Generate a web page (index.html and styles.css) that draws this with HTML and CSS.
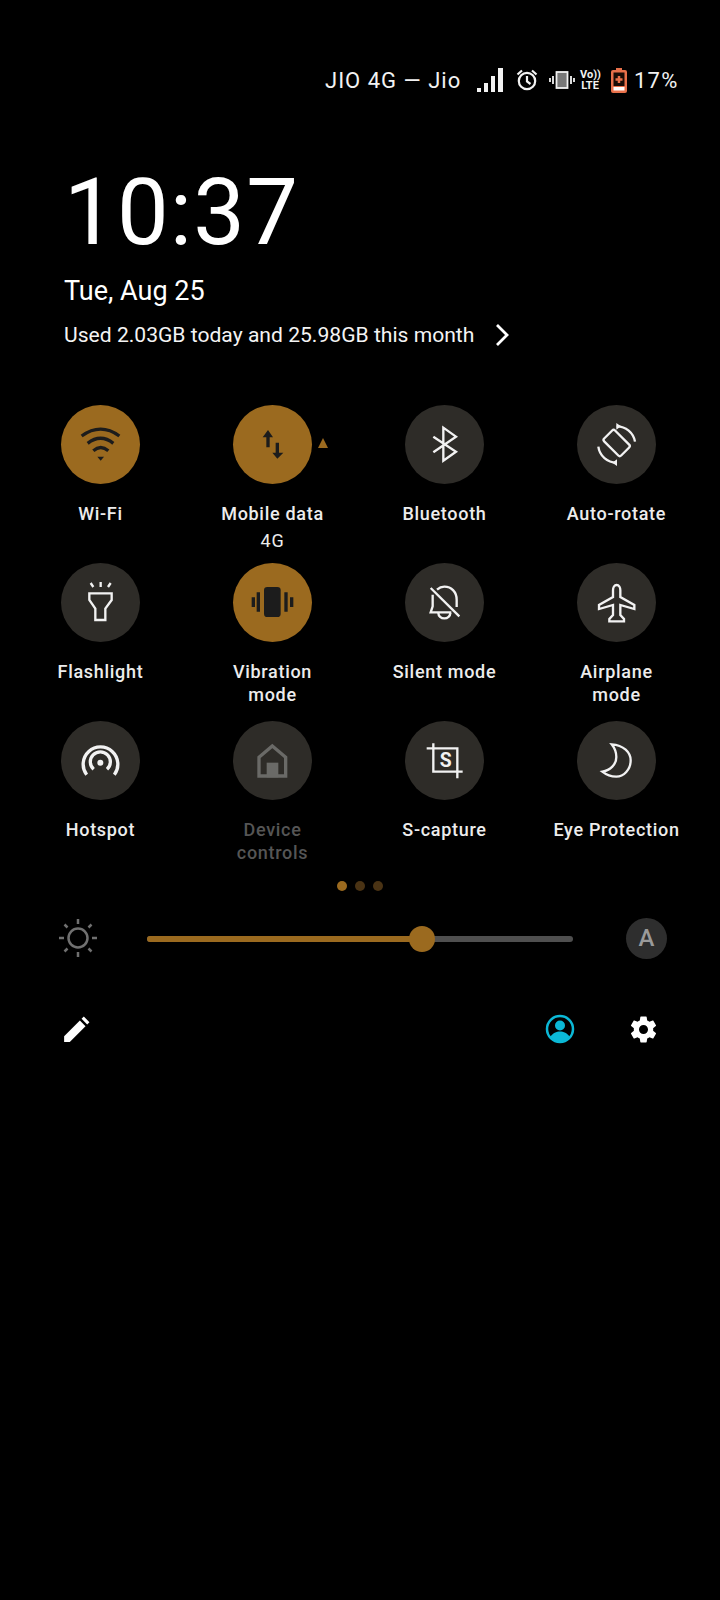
FILE: index.html
```html
<!DOCTYPE html>
<html lang="en">
<head>
    <meta charset="UTF-8">
    <meta name="viewport" content="width=device-width, initial-scale=1.0">
    <title>Quick Settings</title>
    <link rel="stylesheet" href="styles.css">
</head>
<body>
    <div class="status-bar">
        <span class="carrier">JIO 4G — Jio</span>
        <svg class="icon-signal" viewBox="0 0 26 24" width="26" height="24">
            <rect x="0" y="20" width="4" height="4"/>
            <rect x="7" y="15" width="4" height="9"/>
            <rect x="14" y="8" width="4" height="16"/>
            <rect x="21" y="0" width="5" height="24"/>
        </svg>
        <svg class="icon-alarm" viewBox="0 0 24 24" width="24" height="24">
            <circle cx="12" cy="13" r="8.2"/>
            <path d="M12 8v5.5l3.5 2.5"/>
            <path d="M2.5 6.5 7 2.5M21.500 6.500 17 2.500"/>
        </svg>
        <svg class="icon-vibrate" viewBox="0 0 26 20" width="26" height="20">
            <rect class="phone" x="7.500" y="2" width="11" height="16"/>
            <path d="M4 6v8M1 8v4M22 6v8M25 8v4"/>
        </svg>
        <div class="volte"><span>Vo))</span><span>LTE</span></div>
        <svg class="icon-battery" viewBox="0 0 16 25" width="16" height="25">
            <rect x="5" y="0" width="6" height="3" fill="#e8704a"/>
            <rect x="0" y="2" width="16" height="23" rx="2" fill="#e8704a"/>
            <rect x="2.500" y="4.500" width="11" height="13.500" fill="#1a0c06"/>
            <rect x="2.500" y="19" width="11" height="3.500" fill="#fff"/>
            <path d="M8 8v7M4.500 11.500h7" stroke="#e8704a" stroke-width="2.500"/>
        </svg>
        <span class="battery-pct">17%</span>
    </div>

    <div class="clock-block">
        <div class="clock">10:37</div>
        <div class="date">Tue, Aug 25</div>
        <div class="usage">
            <span>Used 2.03GB today and 25.98GB this month</span>
            <svg viewBox="0 0 14 24" width="14" height="24"><path d="M2 2l10 10L2 22"/></svg>
        </div>
    </div>

    <div class="tile-grid">
        <div class="tile on">
            <div class="tile-circle">
                <svg class="heavy" viewBox="0 0 237 237">
                    <path d="M62 93Q119 52 175 93M80 115Q119 85 157 115M97 137Q119 118 142 137"/>
                    <path class="solid" d="M109 155h20l-10 12z"/>
                </svg>
            </div>
            <div class="tile-label">Wi-Fi</div>
        </div>
        <div class="tile on">
            <div class="tile-circle">
                <svg class="heavy" viewBox="0 0 237 237">
                    <path d="M105 88v39M133 113v36"/>
                    <path class="solid" d="M89 97l16-22 15 22zM118 143h33l-18 18z"/>
                </svg>
                <span class="signal-badge"></span>
            </div>
            <div class="tile-label">Mobile data<span class="sub">4G</span></div>
        </div>
        <div class="tile">
            <div class="tile-circle">
                <svg viewBox="0 0 237 237"><path d="M85 95l68 45-38 27V68l38 27-68 47"/></svg>
            </div>
            <div class="tile-label">Bluetooth</div>
        </div>
        <div class="tile">
            <div class="tile-circle">
                <svg viewBox="0 0 237 237">
                    <rect x="96" y="78" width="46" height="72" rx="6" transform="rotate(-45 119 114)"/>
                    <path d="M119 64A55 55 0 0 1 174 110M64 125A55 55 0 0 0 119 173"/>
                    <path class="solid" d="M118 54l14 10-14 10zM120 163l-14 10 14 10z"/>
                </svg>
            </div>
            <div class="tile-label">Auto-rotate</div>
        </div>

        <div class="tile">
            <div class="tile-circle">
                <svg viewBox="0 0 237 237">
                    <path d="M85 91h67v20l-19 26v34H103v-34l-18-26z"/>
                    <path d="M89 60l8 12M119 57v15M149 60l-8 12"/>
                </svg>
            </div>
            <div class="tile-label">Flashlight</div>
        </div>
        <div class="tile on">
            <div class="tile-circle">
                <svg class="heavy" viewBox="0 0 237 237">
                    <rect class="solid" x="93" y="72" width="50" height="90" rx="10"/>
                    <path d="M76 88v58M61 103v29M159 88v58M176 103v29"/>
                </svg>
            </div>
            <div class="tile-label">Vibration<br>mode</div>
        </div>
        <div class="tile">
            <div class="tile-circle">
                <svg viewBox="0 0 237 237">
                    <path d="M83 95v35l-6 18h62"/>
                    <path d="M96 80Q106 71 118 71C140 71 155 88 155 110V132"/>
                    <path d="M77 75l86 85"/>
                    <path d="M100 150a18 16 0 0 0 36 0"/>
                </svg>
            </div>
            <div class="tile-label">Silent mode</div>
        </div>
        <div class="tile">
            <div class="tile-circle">
                <svg viewBox="0 0 237 237">
                    <path d="M119 66c7 0 11 8 11 16v20l42 24v12l-42-12v30l11 12v7H97v-7l11-12v-30l-42 12v-12l42-24V82c0-8 4-16 11-16z"/>
                </svg>
            </div>
            <div class="tile-label">Airplane<br>mode</div>
        </div>

        <div class="tile">
            <div class="tile-circle">
                <svg class="heavy" viewBox="0 0 237 237">
                    <path d="M77 161A52 52 0 1 1 160 161M98 145A30 30 0 1 1 138 145"/>
                    <circle class="solid" cx="118" cy="125" r="9"/>
                </svg>
            </div>
            <div class="tile-label">Hotspot</div>
        </div>
        <div class="tile disabled">
            <div class="tile-circle">
                <svg class="heavy" viewBox="0 0 237 237">
                    <path d="M118 75l40 34v56H78v-56z"/>
                    <rect class="solid" x="101" y="125" width="35" height="44"/>
                </svg>
            </div>
            <div class="tile-label">Device<br>controls</div>
        </div>
        <div class="tile">
            <div class="tile-circle">
                <svg viewBox="0 0 237 237">
                    <path d="M85 67v85h88M65 82h92v90"/>
                    <text x="122" y="137" text-anchor="middle">S</text>
                </svg>
            </div>
            <div class="tile-label">S-capture</div>
        </div>
        <div class="tile">
            <div class="tile-circle">
                <svg viewBox="0 0 237 237">
                    <path d="M104 70c36 2 57 25 57 48 0 28-21 49-43 49-15 0-32-7-42-15 24-4 42-22 42-44 0-16-6-28-14-38z"/>
                </svg>
            </div>
            <div class="tile-label">Eye Protection</div>
        </div>
    </div>

    <div class="page-dots">
        <span class="dot active"></span>
        <span class="dot"></span>
        <span class="dot"></span>
    </div>

    <div class="brightness">
        <svg class="icon-sun" viewBox="0 0 40 40" width="40" height="40">
            <circle cx="20" cy="20" r="9.500"/>
            <path d="M20 1v5M20 34v5M1 20h5M34 20h5M6.500 6.500l3 3M30.500 30.500l3 3M33.500 6.500l-3 3M9.500 30.500l-3 3"/>
        </svg>
        <div class="slider">
            <div class="slider-fill"></div>
            <div class="slider-thumb"></div>
        </div>
        <div class="auto-btn">A</div>
    </div>

    <div class="bottom-row">
        <svg viewBox="0 0 24 24" width="27" height="27" fill="#fff">
            <path d="M1 23v-5L15 4l5 5L6 23zM16.500 2.500l2-2 5 5-2 2z"/>
        </svg>
        <div class="bottom-right">
            <svg class="icon-profile" viewBox="0 0 30 30" width="30" height="30">
                <circle cx="15" cy="15" r="13" fill="none" stroke="#0bb8d6" stroke-width="2.500"/>
                <circle cx="15" cy="11.500" r="5" fill="#0bb8d6"/>
                <path d="M5.500 23c2-4 6-5.500 9.500-5.500s7.500 1.500 9.500 5.500c-2.500 3-6 4.500-9.500 4.500S8 26 5.500 23z" fill="#0bb8d6"/>
            </svg>
            <svg viewBox="0 0 24 24" width="31" height="31" fill="#fff">
                <path d="M19.430 12.980c.04-.32.07-.64.07-.98s-.03-.66-.07-.98l2.110-1.650c.19-.15.24-.42.120-.64l-2-3.460c-.12-.22-.39-.30-.61-.22l-2.490 1c-.52-.40-1.080-.73-1.690-.98l-.38-2.650C14.460 2.180 14.250 2 14 2h-4c-.25 0-.46.180-.49.420l-.38 2.650c-.61.250-1.170.590-1.690.98l-2.490-1c-.23-.090-.49 0-.61.220l-2 3.460c-.13.220-.07.490.12.640l2.110 1.650c-.04.320-.07.650-.07.980s.03.660.07.980l-2.110 1.650c-.19.150-.24.420-.12.640l2 3.460c.12.220.39.300.61.220l2.490-1c.52.400 1.080.730 1.690.980l.38 2.650c.03.240.24.420.49.420h4c.25 0 .46-.180.49-.420l.38-2.650c.61-.250 1.170-.590 1.690-.980l2.490 1c.23.090.49 0 .61-.220l2-3.460c.12-.220.07-.490-.12-.640l-2.110-1.650zM12 15.500c-1.930 0-3.500-1.570-3.500-3.500s1.570-3.500 3.500-3.500 3.500 1.570 3.500 3.500-1.570 3.500-3.500 3.500z"/>
            </svg>
        </div>
    </div>
</body>
</html>
```

FILE: styles.css
```css
:root {
    --amber: #9b6a1f;
    --tile-dark: #2e2c28;
    --tile-icon: #f2f2f2;
    --tile-icon-on: #1c1c1c;
}

* {
    margin: 0;
    padding: 0;
    box-sizing: border-box;
}

body {
    width: 720px;
    min-height: 1600px;
    background-color: #000;
    color: #fff;
    font-family: Roboto, "Noto Sans", sans-serif;
}

/* status bar */
.status-bar {
    display: flex;
    align-items: center;
    height: 28px;
    margin-top: 66px;
    padding-left: 325px;
    font-size: 22px;
    color: #f2f2f2;
}

.carrier {
    width: 152px;
    white-space: nowrap;
    letter-spacing: 1px;
}

.icon-signal {
    fill: #f2f2f2;
    margin-right: 12px;
}

.icon-alarm {
    fill: none;
    stroke: #f2f2f2;
    stroke-width: 2.200;
    margin-right: 10px;
}

.icon-vibrate {
    fill: none;
    stroke: #f2f2f2;
    stroke-width: 1.800;
    margin-right: 5px;
}

.icon-vibrate .phone {
    fill: #777;
}

.volte {
    display: flex;
    flex-direction: column;
    width: 20px;
    margin-right: 11px;
    font-size: 11px;
    font-weight: 700;
    line-height: 11px;
    text-align: center;
    white-space: nowrap;
}

.icon-battery {
    margin-right: 7px;
}

.battery-pct {
    letter-spacing: 1.2px;
}

/* clock */
.clock-block {
    padding-left: 64px;
    margin-top: 69px;
}

.clock {
    font-size: 92px;
    font-weight: 400;
    line-height: 100px;
    letter-spacing: 1.200px;
    white-space: nowrap;
}

.date {
    margin-top: 10px;
    font-size: 27px;
    line-height: 36px;
}

.usage {
    display: flex;
    align-items: center;
    gap: 21px;
    margin-top: 11px;
    font-size: 21.100px;
    line-height: 30px;
    color: #f4f4f4;
}

.usage svg {
    fill: none;
    stroke: #fff;
    stroke-width: 2.800;
}

/* tiles */
.tile-grid {
    display: grid;
    grid-template-columns: repeat(4, 172px);
    grid-auto-rows: 158px;
    margin-top: 55px;
    padding-left: 14.500px;
}

.tile {
    display: flex;
    flex-direction: column;
    align-items: center;
}

.tile-circle {
    position: relative;
    width: 79px;
    height: 79px;
    border-radius: 50%;
    background-color: var(--tile-dark);
}

.tile-circle svg {
    display: block;
    width: 79px;
    height: 79px;
    fill: none;
    stroke: var(--tile-icon);
    stroke-width: 7;
}

.tile-circle svg.heavy {
    stroke-width: 10;
}

.tile-circle .solid {
    fill: var(--tile-icon);
    stroke: none;
}

.tile-circle text {
    font-family: Roboto, sans-serif;
    font-size: 58px;
    font-weight: 700;
    fill: var(--tile-icon);
    stroke: none;
}

.tile.on .tile-circle {
    background-color: var(--amber);
}

.tile.on svg {
    stroke: var(--tile-icon-on);
}

.tile.on .solid {
    fill: var(--tile-icon-on);
}

.tile.disabled svg {
    stroke: #6a6a67;
}

.tile.disabled .solid {
    fill: #6a6a67;
}

.signal-badge {
    position: absolute;
    left: 85px;
    top: 33px;
    width: 0;
    height: 0;
    border-left: 5px solid transparent;
    border-right: 5px solid transparent;
    border-bottom: 10px solid var(--amber);
}

.tile-label {
    margin-top: 18px;
    font-size: 18px;
    font-weight: 500;
    line-height: 23px;
    letter-spacing: 0.700px;
    text-align: center;
    white-space: nowrap;
    color: #ececec;
}

.tile-label .sub {
    display: block;
    margin-top: 4px;
    font-weight: 400;
}

.tile.disabled .tile-label {
    color: #555;
}

/* pager */
.page-dots {
    display: flex;
    justify-content: center;
    gap: 8px;
    margin-top: 2px;
}

.dot {
    width: 10px;
    height: 10px;
    border-radius: 50%;
    background-color: #4a3314;
}

.dot.active {
    background-color: var(--amber);
}

/* brightness */
.brightness {
    display: flex;
    align-items: center;
    height: 42px;
    margin-top: 26px;
    padding-left: 58px;
}

.icon-sun {
    fill: none;
    stroke: #707070;
    stroke-width: 2.500;
}

.slider {
    position: relative;
    width: 426px;
    height: 6px;
    margin-top: 2px;
    margin-left: 49px;
    border-radius: 3px;
    background-color: #4f4f4f;
}

.slider-fill {
    width: 64.500%;
    height: 6px;
    border-radius: 3px;
    background-color: var(--amber);
}

.slider-thumb {
    position: absolute;
    left: 262px;
    top: -10px;
    width: 26px;
    height: 26px;
    border-radius: 50%;
    background-color: var(--amber);
}

.auto-btn {
    width: 41px;
    height: 41px;
    margin-left: 53px;
    border-radius: 50%;
    background-color: #2e2e2e;
    color: #9a9a9a;
    font-size: 24px;
    font-weight: 500;
    line-height: 41px;
    text-align: center;
}

/* bottom row */
.bottom-row {
    display: flex;
    align-items: center;
    justify-content: space-between;
    height: 34px;
    margin-top: 53px;
    padding: 0 61px 0 63px;
}

.bottom-right {
    display: flex;
    align-items: center;
    gap: 53px;
}
```
